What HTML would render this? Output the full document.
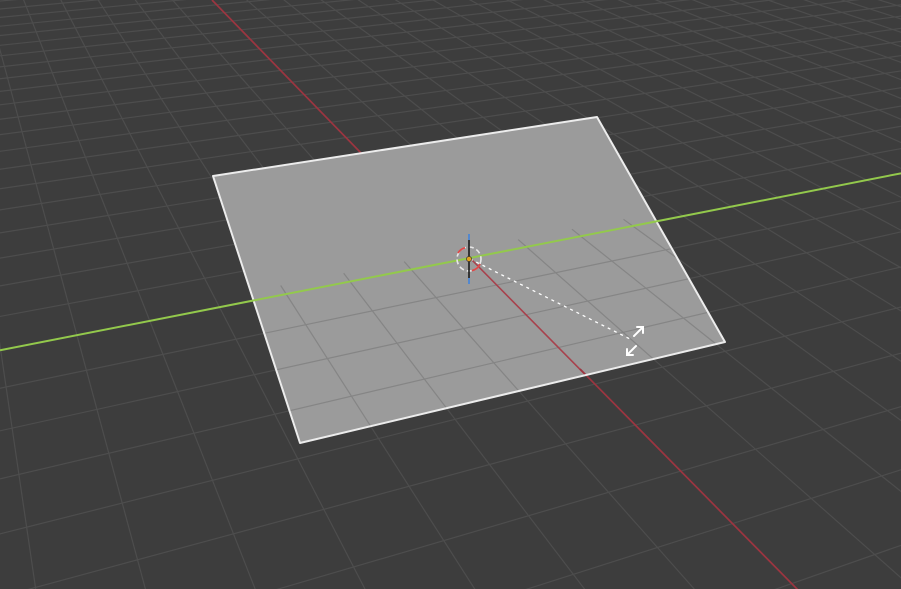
<!DOCTYPE html>
<html><head><meta charset="utf-8"><style>
html,body{margin:0;padding:0;background:#3d3d3d;overflow:hidden;width:901px;height:589px}
svg{display:block}
</style></head><body>
<svg id="s" width="901" height="589" viewBox="0 0 901 589" xmlns="http://www.w3.org/2000/svg">
<rect width="901" height="589" fill="#3d3d3d"/>
<defs><clipPath id="pc"><polygon points="213,176 597,117 725,342 300,443"/></clipPath></defs>
<g id="g1" stroke="#4d4d4d" stroke-width="1.2" fill="none"></g>
<line x1="212" y1="0" x2="361" y2="153" stroke="#9c3540" stroke-width="1.7"/>
<polygon points="213,176 597,117 725,342 300,443" fill="#9b9b9b"/>
<g id="g2" stroke="#858585" stroke-width="1.2" fill="none" clip-path="url(#pc)"></g>
<line x1="470" y1="258" x2="800" y2="592" stroke="#a8414c" stroke-width="1.6" clip-path="url(#pc)"/>
<line x1="580" y1="369" x2="800" y2="592" stroke="#9c3540" stroke-width="1.7"/>
<polygon points="213,176 597,117 725,342 300,443" fill="none" stroke="#ececec" stroke-width="2" stroke-linejoin="round"/>
<line x1="0" y1="350.3" x2="901" y2="173.3" stroke="#93c94c" stroke-width="2"/>
<line x1="470" y1="259" x2="632" y2="340" stroke="#ffffff" stroke-width="1.3" stroke-dasharray="3,4"/>
<circle cx="469" cy="259" r="12" fill="none" stroke="#e8e8e8" stroke-width="1.6" stroke-dasharray="5,3"/>
<path d="M458 253 A12 12 0 0 1 465 247.7 M480 264 A12 12 0 0 1 472 270.6" stroke="#e04848" stroke-width="1.8" fill="none"/>
<line x1="469" y1="240" x2="469" y2="278" stroke="#111" stroke-width="1.5"/>
<line x1="469" y1="234" x2="469" y2="240" stroke="#3b82e0" stroke-width="1.5"/>
<line x1="469" y1="278" x2="469" y2="284" stroke="#3b82e0" stroke-width="1.5"/>
<circle cx="469" cy="259" r="2.6" fill="#e0a020" stroke="#222" stroke-width="0.6"/>
<path d="M634 336 L643 327 M637 327 L643 327 L643 333" stroke="#fff" stroke-width="2" fill="none" stroke-linecap="round"/>
<path d="M636 346 L627 355 M627 349 L627 355 L633 355" stroke="#fff" stroke-width="2" fill="none" stroke-linecap="round"/>
</svg>
<script>
function P(X,Y){var t=0.0458*X,s=0.0202*Y,w=1+t+s;return [(-95*t+3320*s+470)/w,(258-302*t-302*s)/w];}
var ns="http://www.w3.org/2000/svg";
function L(g,a,b){var l=document.createElementNS(ns,"line");l.setAttribute("x1",a[0].toFixed(1));l.setAttribute("y1",a[1].toFixed(1));l.setAttribute("x2",b[0].toFixed(1));l.setAttribute("y2",b[1].toFixed(1));g.appendChild(l);}
var g1=document.getElementById("g1"),g2=document.getElementById("g2");
for(var Y=-10;Y<=26;Y++){if(Y==0)continue;L(g1,P(-11,Y),P(80,Y));L(g2,P(-11,Y),P(0.3,Y));}
for(var X=-10;X<=60;X++){if(X==0)continue;L(g1,P(X,-10),P(X,28));if(X<0)L(g2,P(X,-10),P(X,28));}
</script>
</body></html>
